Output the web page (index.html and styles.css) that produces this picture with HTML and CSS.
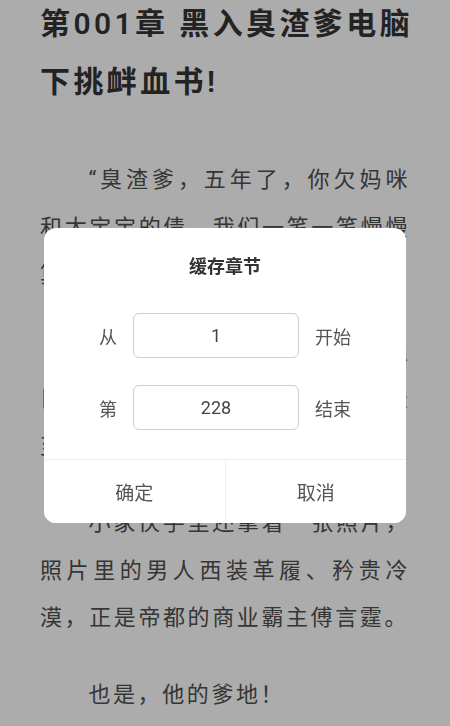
FILE: index.html
```html
<!DOCTYPE html>
<html lang="zh-CN">
	<head>
		<meta charset="UTF-8" />
		<meta name="viewport" content="width=device-width, initial-scale=1.0" />
		<title>阅读</title>
		<link rel="stylesheet" href="styles.css">
	</head>
	<body>
		<div class="reader">
			<h1 class="chapterTitle">第001章 黑入臭渣爹电脑下挑衅血书!</h1>
			<p>“臭渣爹，五年了，你欠妈咪和太宝宝的债，我们一笔一笔慢慢算！”</p>
			<p>屏幕上，一行血红的大字，触目惊心，还配着个鬼脸表情！嚣张至极。</p>
			<p>小家伙手里还拿着一张照片，照片里的男人西装革履、矜贵冷漠，正是帝都的商业霸主傅言霆。</p>
			<p>也是，他的爹地！</p>
		</div>

		<div class="cacheMask">
			<div class="cacheDialog">
				<h2 class="cacheTitle">缓存章节</h2>
				<div class="cacheForm">
					<div class="cacheRow">
						<span class="cacheLabel">从</span>
						<input class="cacheInput" type="text" value="1">
						<span class="cacheLabel">开始</span>
					</div>
					<div class="cacheRow">
						<span class="cacheLabel">第</span>
						<input class="cacheInput" type="text" value="228">
						<span class="cacheLabel">结束</span>
					</div>
				</div>
				<div class="cacheActions">
					<button id="cacheConfirm">确定</button>
					<button id="cacheCancel">取消</button>
				</div>
			</div>
		</div>
	</body>
</html>
```

FILE: styles.css
```css
* {
	box-sizing: border-box;
}

body {
	margin: 0;
	background: #f7f7f7;
	font-family: Roboto, "Noto Sans CJK SC", sans-serif;
}

.reader {
	padding: 0 40px;
}

.chapterTitle {
	margin: -5px -12px 45px 0;
	font-size: 30px;
	line-height: 58px;
	letter-spacing: 3.4px;
	font-weight: 600;
	color: #333;
}

.reader p {
	margin: 0 0 29px;
	font-size: 22px;
	line-height: 47.5px;
	letter-spacing: 2.6px;
	text-indent: 2.2em;
	text-align: justify;
	color: #4d4d4d;
}

.cacheMask {
	position: fixed;
	top: 0;
	left: 0;
	right: 0;
	bottom: 0;
	background: rgba(0, 0, 0, 0.3);
	display: flex;
	justify-content: center;
	align-items: flex-start;
	padding-top: 228px;
}

.cacheDialog {
	width: 362px;
	background: white;
	border-radius: 12px;
	overflow: hidden;
}

.cacheTitle {
	margin: 0;
	padding-top: 27px;
	font-size: 18px;
	line-height: 24px;
	font-weight: 600;
	text-align: center;
	color: #333;
}

.cacheForm {
	display: flex;
	flex-direction: column;
	gap: 27px;
	padding: 34px 0 29px;
}

.cacheRow {
	display: flex;
	justify-content: center;
	align-items: center;
	gap: 16px;
}

.cacheLabel {
	font-size: 18px;
	color: #555;
}

.cacheInput {
	width: 166px;
	height: 45px;
	border: 1px solid #cdcdcd;
	border-radius: 6px;
	font-family: inherit;
	font-size: 18px;
	color: #444;
	text-align: center;
	outline: none;
}

.cacheActions {
	display: flex;
	border-top: 1px solid #f0f0f0;
}

.cacheActions button {
	flex: 1;
	height: 63px;
	border: none;
	background: white;
	font-family: inherit;
	font-size: 19px;
	color: #555;
	cursor: pointer;
}

.cacheActions button + button {
	border-left: 1px solid #f0f0f0;
}
```
